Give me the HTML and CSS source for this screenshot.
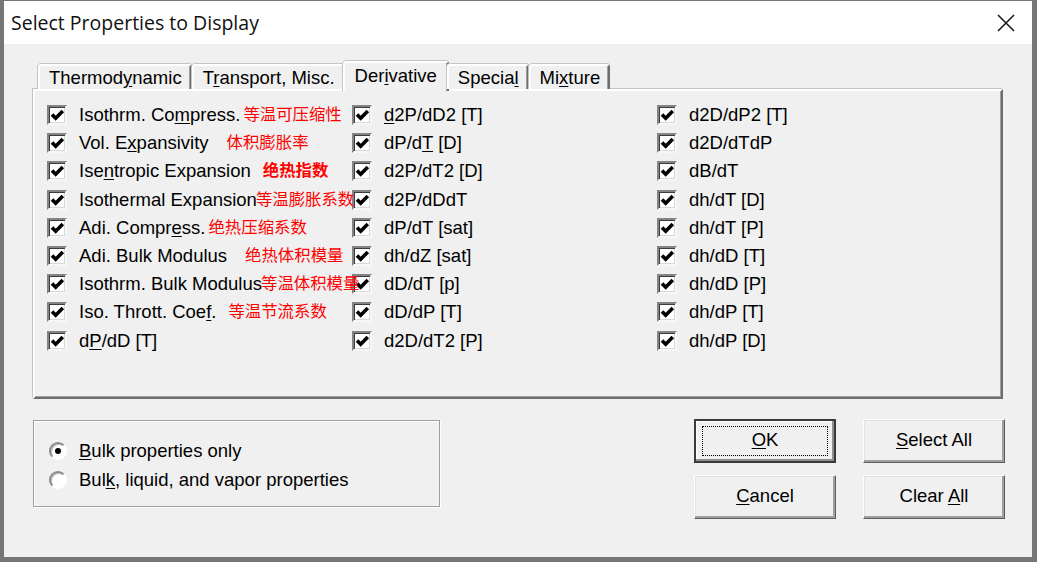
FILE: index.html
```html
<!DOCTYPE html>
<html lang="en">
<head>
    <meta charset="UTF-8">
    <title>Select Properties to Display</title>
    <link rel="stylesheet" href="styles.css">
</head>
<body>
    <div class="window">
        <div class="titlebar">
            <span class="title">Select Properties to Display</span>
            <svg class="close" width="18" height="18" viewBox="0 0 18 18">
                <path d="M1 1 L17 17 M17 1 L1 17" stroke="#1a1a1a" stroke-width="1.6" fill="none"/>
            </svg>
        </div>

        <div class="client">
            <div class="tabs">
                <div class="tab">Thermod<u>y</u>namic</div>
                <div class="tab">T<u>r</u>ansport, Misc.</div>
                <div class="tab active">Der<u>i</u>vative</div>
                <div class="tab">Specia<u>l</u></div>
                <div class="tab">Mi<u>x</u>ture</div>
            </div>

            <div class="panel">
                <div class="props">
                    <!-- column 1 -->
                    <div class="prop"><span class="box"></span><span class="label">Isothrm. Co<u>m</u>press.</span><span class="note near">等温可压缩性</span></div>
                    <div class="prop"><span class="box"></span><span class="label">Vol. E<u>x</u>pansivity</span><span class="note far">体积膨胀率</span></div>
                    <div class="prop"><span class="box"></span><span class="label">Ise<u>n</u>tropic Expansion</span><span class="note strong">绝热指数</span></div>
                    <div class="prop"><span class="box"></span><span class="label">Isothermal Expansion</span><span class="note tight">等温膨胀系数</span></div>
                    <div class="prop"><span class="box"></span><span class="label">Adi. Compr<u>e</u>ss.</span><span class="note near">绝热压缩系数</span></div>
                    <div class="prop"><span class="box"></span><span class="label">Adi. Bulk Modulus</span><span class="note far">绝热体积模量</span></div>
                    <div class="prop"><span class="box"></span><span class="label">Isothrm. Bulk Modulus</span><span class="note tight">等温体积模量</span></div>
                    <div class="prop"><span class="box"></span><span class="label">Iso. Thrott. Coe<u>f</u>.</span><span class="note">等温节流系数</span></div>
                    <div class="prop"><span class="box"></span><span class="label">d<u>P</u>/dD [T]</span></div>
                    <!-- column 2 -->
                    <div class="prop"><span class="box"></span><span class="label"><u>d</u>2P/dD2 [T]</span></div>
                    <div class="prop"><span class="box"></span><span class="label">dP/d<u>T</u> [D]</span></div>
                    <div class="prop"><span class="box"></span><span class="label">d2P/dT2 [D]</span></div>
                    <div class="prop"><span class="box"></span><span class="label">d2P/dDdT</span></div>
                    <div class="prop"><span class="box"></span><span class="label">dP/dT [sat]</span></div>
                    <div class="prop"><span class="box"></span><span class="label">dh/dZ [sat]</span></div>
                    <div class="prop"><span class="box"></span><span class="label">dD/dT [p]</span></div>
                    <div class="prop"><span class="box"></span><span class="label">dD/dP [T]</span></div>
                    <div class="prop"><span class="box"></span><span class="label">d2D/dT2 [P]</span></div>
                    <!-- column 3 -->
                    <div class="prop"><span class="box"></span><span class="label">d2D/dP2 [T]</span></div>
                    <div class="prop"><span class="box"></span><span class="label">d2D/dTdP</span></div>
                    <div class="prop"><span class="box"></span><span class="label">dB/dT</span></div>
                    <div class="prop"><span class="box"></span><span class="label">dh/dT [D]</span></div>
                    <div class="prop"><span class="box"></span><span class="label">dh/dT [P]</span></div>
                    <div class="prop"><span class="box"></span><span class="label">dh/dD [T]</span></div>
                    <div class="prop"><span class="box"></span><span class="label">dh/dD [P]</span></div>
                    <div class="prop"><span class="box"></span><span class="label">dh/dP [T]</span></div>
                    <div class="prop"><span class="box"></span><span class="label">dh/dP [D]</span></div>
                </div>
            </div>

            <div class="bottom">
                <div class="group">
                    <div class="option"><span class="radio"><span class="dot"></span></span><span class="label"><u>B</u>ulk properties only</span></div>
                    <div class="option"><span class="radio"></span><span class="label">Bul<u>k</u>, liquid, and vapor properties</span></div>
                </div>
                <div class="buttons">
                    <div class="btn default"><span><u>O</u>K</span></div>
                    <div class="btn"><span><u>S</u>elect All</span></div>
                    <div class="btn"><span><u>C</u>ancel</span></div>
                    <div class="btn"><span>Clear <u>A</u>ll</span></div>
                </div>
            </div>
        </div>
    </div>
</body>
</html>
```

FILE: styles.css
```css
* {
    box-sizing: border-box;
}
body {
    margin: 0;
    font-family: "Liberation Sans", Arial, sans-serif;
    font-size: 18.5px;
    color: #000;
    background: #fff;
}
u {
    text-underline-offset: 2px;
}

/* window frame */
.window {
    width: 1037px;
    height: 562px;
    display: flex;
    flex-direction: column;
    border: 1px solid #767676;
    border-left-width: 4px;
    border-right-width: 5px;
    border-bottom-width: 5px;
}
.titlebar {
    height: 43px;
    flex: none;
    background: #fff;
    display: flex;
    align-items: center;
    justify-content: space-between;
    padding: 0 17px 0 7px;
}
.title {
    font-family: "Open Sans", "Noto Sans", sans-serif;
    font-size: 19.5px;
    color: #111;
}
.client {
    flex: 1;
    background: #f0f0f0;
    padding: 17px 0 0 29px;
}

/* tabs */
.tabs {
    display: flex;
    align-items: flex-end;
    height: 28px;
    padding-left: 5px;
    position: relative;
    z-index: 1;
}
.tab {
    height: 25px;
    padding: 0 8px 0 9px;
    line-height: 23px;
    border-top: 2px solid #fff;
    border-left: 2px solid #fff;
    border-right: 2px solid #6d6d6d;
    border-radius: 3px 3px 0 0;
    box-shadow: inset -1px 0 #a0a0a0, -1px 0 #c4c4c4, 0 -1px #c4c4c4;
    background: #f0f0f0;
}
.tab.active {
    height: 30px;
    margin: 0 -2px -2px;
    padding: 0 10px;
    line-height: 25px;
}

.panel {
    width: 970px;
    height: 310px;
    border: 2px solid;
    border-color: #fff #6d6d6d #6d6d6d #fff;
    box-shadow: inset -1px -1px #a0a0a0, -1px -1px #c4c4c4;
    padding: 10px 0 0 12px;
}
.props {
    display: grid;
    grid-template-columns: 305px 305px 1fr;
    grid-template-rows: repeat(9, 28.2px);
    grid-auto-flow: column;
}
.prop {
    display: flex;
    align-items: center;
    white-space: nowrap;
}
.box {
    flex: none;
    width: 20px;
    height: 20px;
    margin-right: 12px;
    border: 2px solid;
    border-color: #848484 #f6f6f6 #f6f6f6 #848484;
    box-shadow: inset 1px 1px #3c3c3c, inset -1px -1px #d8d8d8;
    background: #fff url("data:image/svg+xml,%3Csvg xmlns='http://www.w3.org/2000/svg' width='16' height='16' viewBox='0 0 16 16'%3E%3Cpolyline points='3,7.4 6.7,11.2 13.8,4' fill='none' stroke='%23000' stroke-width='3.6'/%3E%3C/svg%3E") center / 16px 16px no-repeat;
}
.note {
    font-family: "Noto Sans CJK SC", sans-serif;
    font-size: 16.4px;
    color: #ff0000;
    margin-left: 12px;
    margin-top: -4px;
    position: relative;
}
.note.near {
    margin-left: 3px;
}
.note.far {
    margin-left: 18px;
}
.note.tight {
    margin-left: -1px;
}
.note.strong {
    font-weight: bold;
}

/* bottom area */
.bottom {
    display: flex;
    justify-content: space-between;
    width: 972px;
    margin-top: 20px;
}
.group {
    width: 407px;
    height: 87px;
    margin-top: 1px;
    border: 1px solid #a0a0a0;
    box-shadow: inset 1px 1px #fff, 1px 1px #fff;
    padding: 16px 0 0 15px;
}
.option {
    display: flex;
    align-items: center;
    height: 28.5px;
}
.radio {
    width: 18px;
    height: 18px;
    margin-right: 12px;
    border-radius: 50%;
    border: 2px solid;
    border-color: #8a8a8a #fff #fff #8a8a8a;
    box-shadow: inset 1px 1px #bcbcbc;
    background: #fff;
    display: flex;
    align-items: center;
    justify-content: center;
}
.dot {
    width: 6px;
    height: 6px;
    border-radius: 50%;
    background: #000;
}
.buttons {
    display: grid;
    grid-template-columns: 142px 142px;
    grid-auto-rows: 44px;
    column-gap: 27px;
    row-gap: 12px;
}
.btn {
    position: relative;
    display: flex;
    align-items: center;
    justify-content: center;
    border: 1px solid;
    border-color: #fff #5c5c5c #5c5c5c #fff;
    box-shadow: inset -2px -2px #a0a0a0, inset 1px 1px #e3e3e3;
    background: #f0f0f0;
    padding-bottom: 2px;
}
.btn.default {
    border: 2px solid #3a3a3a;
    box-shadow: inset -2px -2px #909090, inset 1px 1px #fff;
}
.btn.default::after {
    content: "";
    position: absolute;
    inset: 5px 6px;
    border: 1px dotted #000;
}
```
